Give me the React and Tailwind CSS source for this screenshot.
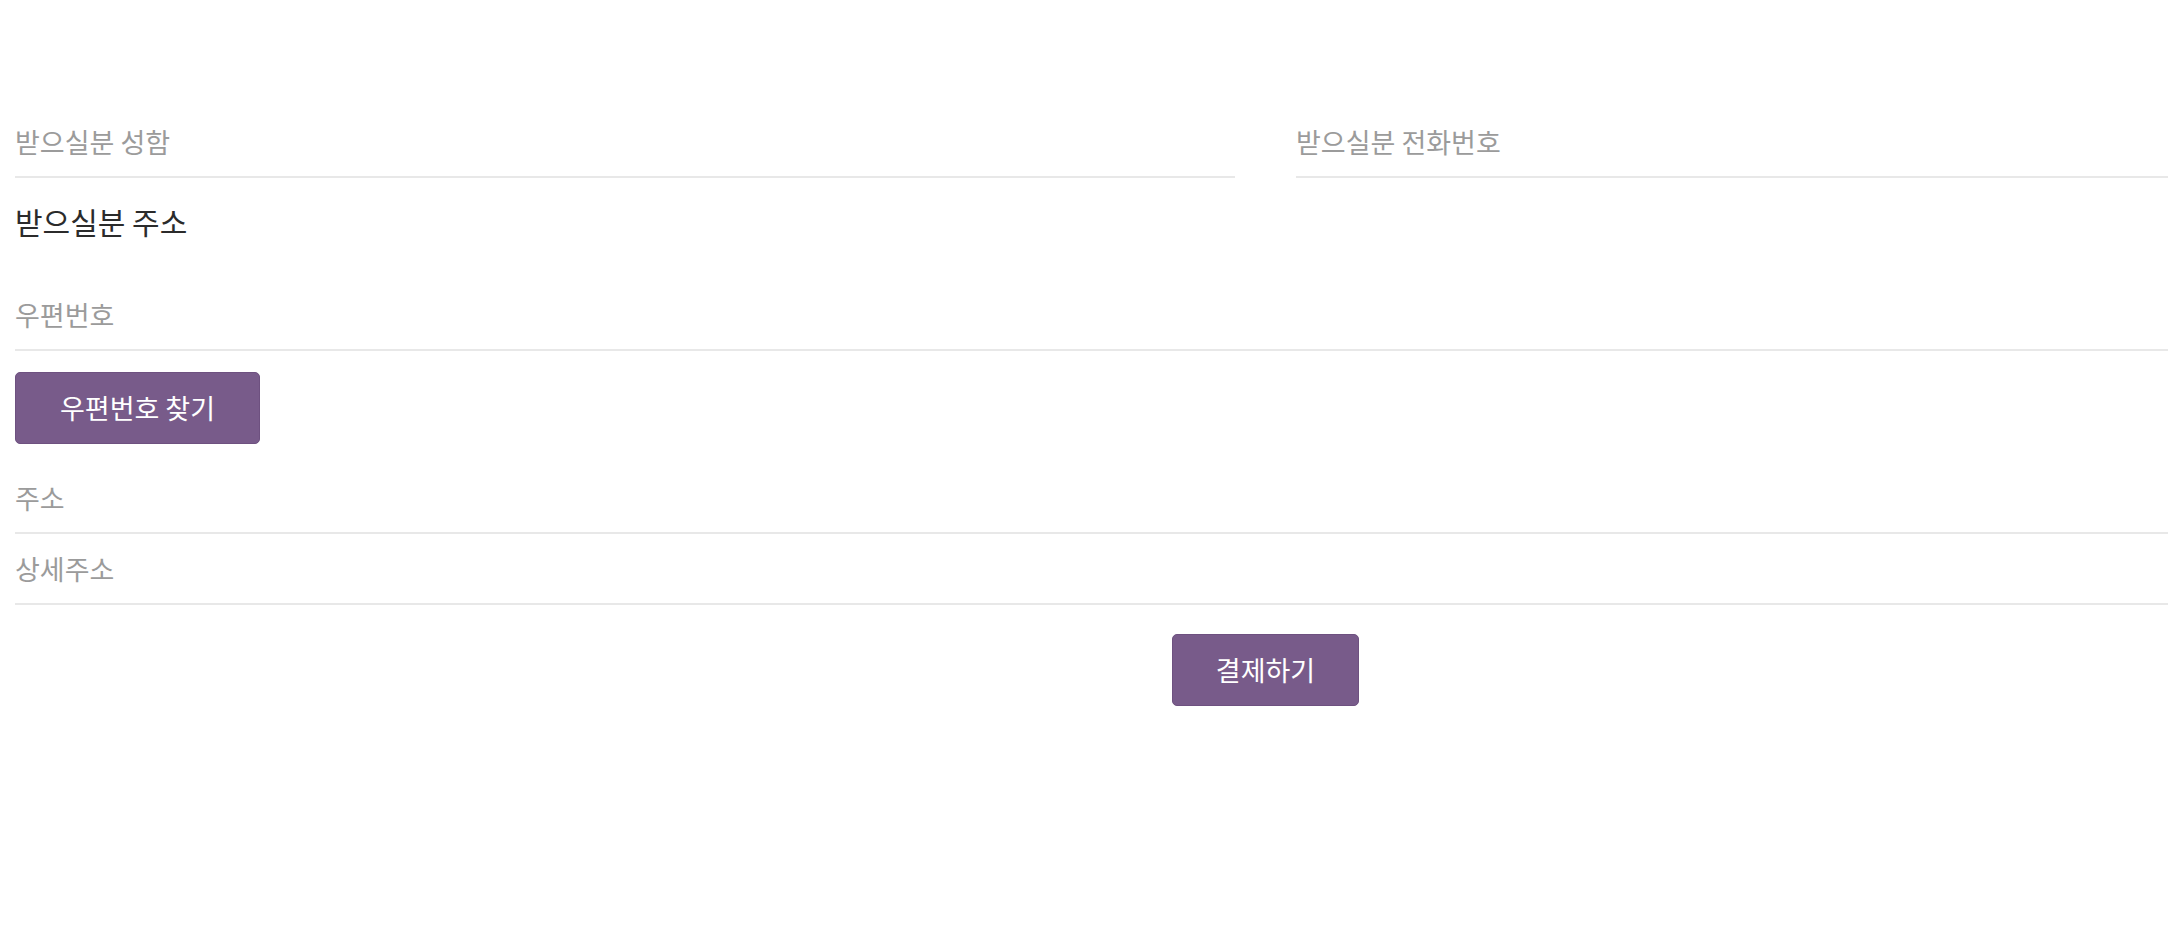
import React from "react";

const font = "font-['Noto_Sans_CJK_KR','Noto_Sans',sans-serif]";

const Field = ({ placeholder, className = "" }) => (
  <input
    type="text"
    placeholder={placeholder}
    className={`block w-full h-[71px] border-b-2 border-[#e8e8e8] bg-transparent text-[27px] text-[#333] outline-none placeholder:text-[#9b9b9b] ${className}`}
  />
);

const App = () => {
  return (
    <div className={`min-h-screen w-full overflow-hidden bg-white ${font}`}>
      <div className="ml-[15px] w-[2501px] pt-[107px]">
        {/* Receiver name / phone */}
        <div className="grid grid-cols-2 gap-x-[61px]">
          <Field placeholder="받으실분 성함" />
          <Field placeholder="받으실분 전화번호" />
        </div>

        {/* Address heading */}
        <h3 className="mt-[26px] mb-[42px] text-[30px] leading-[34px] text-[#2b2b2b]">
          받으실분 주소
        </h3>

        <Field placeholder="우편번호" />

        <button
          type="button"
          className="mt-[21px] flex h-[72px] w-[245px] items-center justify-center rounded-[5px] border border-[#6e5180] bg-[#785b8a] text-[27px] text-white"
        >
          우편번호 찾기
        </button>

        <Field placeholder="주소" className="mt-[19px]" />
        <Field placeholder="상세주소" />

        {/* Submit */}
        <div className="mt-[29px] flex justify-center">
          <button
            type="button"
            className="flex h-[72px] w-[187px] items-center justify-center rounded-[5px] border border-[#6e5180] bg-[#785b8a] text-[27px] text-white"
          >
            결제하기
          </button>
        </div>
      </div>
    </div>
  );
};

export default App;
